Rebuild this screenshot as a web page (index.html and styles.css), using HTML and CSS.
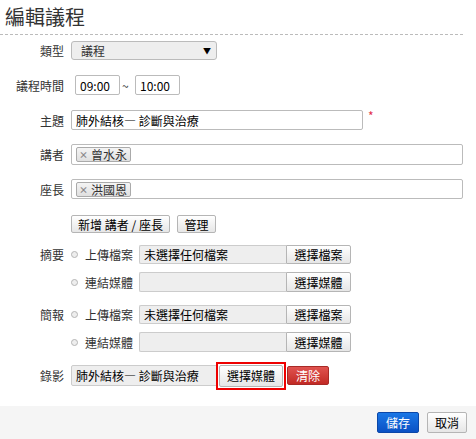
FILE: index.html
```html
<!DOCTYPE html>
<html lang="zh-Hant">
<head>
<meta charset="UTF-8" />
<title>編輯議程</title>
<link rel="stylesheet" href="styles.css">
</head>
<body>
  <h1 class="title">編輯議程</h1>

  <div class="edit-form">
    <div class="row type-row">
      <label class="lbl">類型</label>
      <div class="sel">議程<span class="arrow">▼</span></div>
    </div>

    <div class="row">
      <label class="lbl">議程時間</label>
      <input class="inp time" type="text" value="09:00" />
      <span class="tilde">~</span>
      <input class="inp time" type="text" value="10:00" />
    </div>

    <div class="row topic-row">
      <label class="lbl">主題</label>
      <input class="inp topic" type="text" value="肺外結核— 診斷與治療" />
      <span class="req">*</span>
    </div>

    <div class="row tag-row">
      <label class="lbl">講者</label>
      <div class="tags">
        <span class="tag"><span class="x">×</span>曾水永</span>
      </div>
    </div>

    <div class="row tag-row last">
      <label class="lbl">座長</label>
      <div class="tags">
        <span class="tag"><span class="x">×</span>洪國恩</span>
      </div>
    </div>

    <div class="row actions">
      <span class="lbl"></span>
      <button class="btn add">新增 講者 / 座長</button>
      <button class="btn manage">管理</button>
    </div>

    <div class="row sub">
      <label class="lbl">摘要</label>
      <span class="radio"></span>
      <span class="opt">上傳檔案</span>
      <div class="file">未選擇任何檔案</div>
      <button class="btn pick">選擇檔案</button>
    </div>
    <div class="row sub second">
      <span class="lbl"></span>
      <span class="radio"></span>
      <span class="opt">連結媒體</span>
      <div class="file"></div>
      <button class="btn pick">選擇媒體</button>
    </div>

    <div class="row sub">
      <label class="lbl">簡報</label>
      <span class="radio"></span>
      <span class="opt">上傳檔案</span>
      <div class="file">未選擇任何檔案</div>
      <button class="btn pick">選擇檔案</button>
    </div>
    <div class="row sub second">
      <span class="lbl"></span>
      <span class="radio"></span>
      <span class="opt">連結媒體</span>
      <div class="file"></div>
      <button class="btn pick">選擇媒體</button>
    </div>

    <div class="row video">
      <label class="lbl">錄影</label>
      <div class="file media">肺外結核— 診斷與治療</div>
      <span class="mark"><button class="btn choose">選擇媒體</button></span>
      <button class="btn danger">清除</button>
    </div>
  </div>

  <div class="footer">
    <button class="btn primary">儲存</button>
    <button class="btn">取消</button>
  </div>
</body>
</html>
```

FILE: styles.css
```css
* {
  margin: 0; padding: 0; box-sizing: border-box;
}
body {
  font-family: "Noto Sans CJK TC", "Noto Sans", Arial, sans-serif;
  font-size: 12px;
  color: #333;
  background: #fff;
}
.title {
  font-size: 20px;
  font-weight: normal;
  line-height: 34px;
  padding-left: 5px;
  margin-right: 13px;
  border-bottom: 1px dashed #bbb;
  color: #333;
}
.edit-form {
  padding-top: 6px;
  width: 463px;
}
.row {
  display: flex;
  align-items: center;
  height: 20px;
  margin-bottom: 15px;
}
.type-row {
  height: 19px;
}
.topic-row {
  margin-bottom: 14px;
}
.tag-row {
  height: 21px;
  margin-bottom: 14px;
}
.tag-row.last {
  height: 20px;
  margin-bottom: 16px;
}
.lbl {
  width: 64px;
  flex: none;
  text-align: right;
  margin-right: 7px;
  color: #333;
}
.sel {
  position: relative;
  width: 146px;
  height: 19px;
  line-height: 17px;
  padding-left: 9px;
  border: 1px solid #bbb;
  border-radius: 3px;
  background: #eee;
  color: #333;
}
.sel .arrow {
  position: absolute;
  right: 5px;
  top: 0;
  font-size: 8px;
  color: #000;
}
.inp {
  height: 20px;
  border: 1px solid #bbb;
  border-radius: 2px;
  font-family: inherit;
  font-size: 12px;
  color: #000;
  padding: 0 4px;
  outline: none;
}
.time {
  width: 45px;
  margin-left: 4px;
}
.tilde {
  width: 12px;
  padding-left: 2px;
  color: #333;
}
.time + .tilde + .time {
  margin-left: 3px;
}
.topic {
  width: 292px;
}
.req {
  color: #e2304b;
  margin-left: 5px;
  align-self: flex-start;
  line-height: 12px;
}
.tags {
  flex: 1;
  height: 100%;
  border: 1px solid #bbb;
  border-radius: 2px;
  padding: 2px 4px;
  display: flex;
  align-items: center;
}
.tag {
  display: inline-flex;
  align-items: center;
  height: 15px;
  padding: 0 3px 0 2px;
  border: 1px solid #aaa;
  border-radius: 2px;
  background: linear-gradient(#f4f4f4, #e0e0e0);
  color: #333;
  line-height: 13px;
}
.tag .x {
  font-size: 9px;
  color: #888;
  margin-right: 3px;
  font-weight: bold;
}
.btn {
  height: 18px;
  padding: 0;
  font-family: inherit;
  font-size: 12px;
  white-space: nowrap;
  color: #000;
  border: 1px solid #b5b5b5;
  border-radius: 2px;
  background: linear-gradient(#fff, #e6e6e6);
  cursor: pointer;
}
.actions {
  height: 18px;
  margin-bottom: 12px;
}
.actions .btn {
  height: 18px;
  margin-right: 7px;
}
.add {
  width: 99px;
}
.manage {
  width: 39px;
}
.sub {
  height: 19px;
  margin-bottom: 8px;
}
.sub.second {
  height: 20px;
  margin-bottom: 13px;
}
.radio {
  width: 7px;
  height: 7px;
  border-radius: 50%;
  border: 1px solid #b5b5b5;
  background: #eee;
  margin: 0 7px 0 0;
  flex: none;
}
.opt {
  width: 54px;
  color: #333;
}
.file {
  width: 147px;
  height: 100%;
  line-height: 18px;
  padding-left: 4px;
  border: 1px solid #ccc;
  border-right: none;
  border-radius: 2px 0 0 2px;
  background: #eee;
  color: #000;
}
.pick {
  width: 65px;
  height: 100%;
  border-radius: 0 2px 2px 0;
}
.video {
  height: 21px;
  margin-bottom: 20px;
}
.media {
  width: 147px;
  border-right: 1px solid #ccc;
  line-height: 19px;
}
/* red annotation frame */
.mark {
  display: flex;
  margin-left: -2px;
  padding: 1px;
  border: 2px solid #e00;
}
.choose {
  width: 64px;
  height: 22px;
}
.danger {
  width: 42px;
  height: 19px;
  margin-left: 1px;
  color: #fff;
  border-color: #a82a26;
  background: linear-gradient(#e0534f, #c22a25);
}
.footer {
  height: 33px;
  background: #f5f5f5;
  display: flex;
  justify-content: flex-end;
  align-items: center;
  padding-right: 9px;
  gap: 8px;
}
.footer .btn {
  width: 40px;
  height: 21px;
}
.footer .primary {
  width: 42px;
  color: #fff;
  border-color: #0b47a8;
  background: linear-gradient(#1a77e6, #0a51c4);
}
```
